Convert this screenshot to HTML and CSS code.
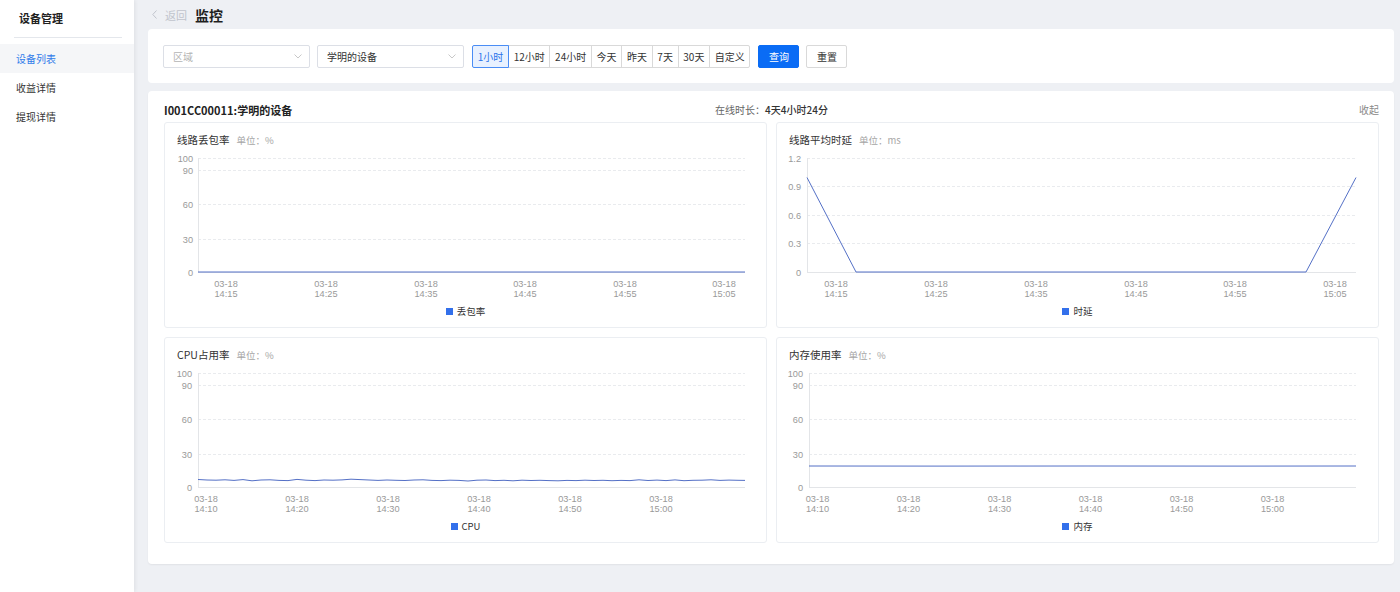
FILE: index.html
```html
<!DOCTYPE html>
<html lang="zh">
<head>
<meta charset="utf-8">
<title>监控</title>
<link rel="stylesheet" href="styles.css">
</head>
<body>
<aside class="sidebar">
  <div class="side-head">设备管理</div>
  <ul class="side-menu">
    <li class="side-item active">设备列表</li>
    <li class="side-item">收益详情</li>
    <li class="side-item">提现详情</li>
  </ul>
</aside>
<main class="main">
  <div class="page-head">
    <svg class="back-icon" width="5" height="9" viewBox="0 0 5 9"><path d="M4.5 0.5 L0.8 4.5 L4.5 8.5" fill="none" stroke="#c0c4cc" stroke-width="1"/></svg>
    <span class="back-text">返回</span>
    <span class="page-title">监控</span>
  </div>

  <section class="filter-card">
    <div class="select placeholder"><span>区域</span><svg width="8" height="5" viewBox="0 0 8 5"><path d="M0.5 0.5 L4 4 L7.5 0.5" fill="none" stroke="#c8c8c8" stroke-width="1"/></svg></div>
    <div class="select second"><span>学明的设备</span><svg width="8" height="5" viewBox="0 0 8 5"><path d="M0.5 0.5 L4 4 L7.5 0.5" fill="none" stroke="#c8c8c8" stroke-width="1"/></svg></div>
    <div class="tabs">
      <span class="tb active">1小时</span>
      <span class="tb">12小时</span>
      <span class="tb">24小时</span>
      <span class="tb">今天</span>
      <span class="tb">昨天</span>
      <span class="tb">7天</span>
      <span class="tb">30天</span>
      <span class="tb">自定义</span>
    </div>
    <button class="btn primary">查询</button>
    <button class="btn plain">重置</button>
  </section>

  <section class="card">
    <div class="card-head">
      <div class="dev-name">I001CC00011:学明的设备</div>
      <div class="online"><span class="online-label">在线时长：</span><span class="online-val">4天4小时24分</span></div>
      <div class="collapse">收起</div>
    </div>
    <div class="charts">
      <!-- chart 1 -->
      <div class="panel">
        <div class="panel-title">线路丢包率<span class="unit">单位：%</span></div>
        <svg class="chart" width="577" height="152" viewBox="0 0 577 152">
          <g class="grid">
            <line x1="21" y1="10.5" x2="568" y2="10.5"/>
            <line x1="21" y1="22.5" x2="568" y2="22.5"/>
            <line x1="21" y1="56.5" x2="568" y2="56.5"/>
            <line x1="21" y1="91.5" x2="568" y2="91.5"/>
          </g>
          <line class="axis" x1="21.5" y1="10" x2="21.5" y2="124"/>
          <line class="axis" x1="21" y1="124.5" x2="568" y2="124.5"/>
          <line class="data" x1="21" y1="124" x2="568" y2="124"/>
          <g class="ylab">
            <text x="16" y="14">100</text>
            <text x="16" y="26">90</text>
            <text x="16" y="60">60</text>
            <text x="16" y="94.5">30</text>
            <text x="16" y="127.5">0</text>
          </g>
          <g class="xlab">
            <text x="49" y="138.7">03-18</text><text x="49" y="149.3">14:15</text>
            <text x="149" y="138.7">03-18</text><text x="149" y="149.3">14:25</text>
            <text x="249" y="138.7">03-18</text><text x="249" y="149.3">14:35</text>
            <text x="348" y="138.7">03-18</text><text x="348" y="149.3">14:45</text>
            <text x="448" y="138.7">03-18</text><text x="448" y="149.3">14:55</text>
            <text x="547" y="138.7">03-18</text><text x="547" y="149.3">15:05</text>
          </g>
        </svg>
        <div class="legend"><i class="swatch"></i><span>丢包率</span></div>
      </div>

      <!-- chart 2 -->
      <div class="panel">
        <div class="panel-title">线路平均时延<span class="unit">单位：ms</span></div>
        <svg class="chart" width="577" height="152" viewBox="0 0 577 152">
          <g class="grid">
            <line x1="18" y1="10.5" x2="567" y2="10.5"/>
            <line x1="18" y1="38.5" x2="567" y2="38.5"/>
            <line x1="18" y1="67.5" x2="567" y2="67.5"/>
            <line x1="18" y1="95.5" x2="567" y2="95.5"/>
          </g>
          <line class="axis" x1="18.5" y1="10" x2="18.5" y2="124"/>
          <line class="axis" x1="18" y1="124.5" x2="567" y2="124.5"/>
          <polyline class="data" points="18,29.5 67,124 517,124 567,29.5"/>
          <g class="ylab">
            <text x="12" y="14">1.2</text>
            <text x="12" y="42">0.9</text>
            <text x="12" y="71">0.6</text>
            <text x="12" y="99">0.3</text>
            <text x="12" y="127.5">0</text>
          </g>
          <g class="xlab">
            <text x="47" y="138.7">03-18</text><text x="47" y="149.3">14:15</text>
            <text x="147" y="138.7">03-18</text><text x="147" y="149.3">14:25</text>
            <text x="247" y="138.7">03-18</text><text x="247" y="149.3">14:35</text>
            <text x="347" y="138.7">03-18</text><text x="347" y="149.3">14:45</text>
            <text x="446" y="138.7">03-18</text><text x="446" y="149.3">14:55</text>
            <text x="546" y="138.7">03-18</text><text x="546" y="149.3">15:05</text>
          </g>
        </svg>
        <div class="legend"><i class="swatch"></i><span>时延</span></div>
      </div>

      <!-- chart 3 -->
      <div class="panel">
        <div class="panel-title">CPU占用率<span class="unit">单位：%</span></div>
        <svg class="chart" width="577" height="152" viewBox="0 0 577 152">
          <g class="grid">
            <line x1="21" y1="10.5" x2="568" y2="10.5"/>
            <line x1="21" y1="22.5" x2="568" y2="22.5"/>
            <line x1="21" y1="56.5" x2="568" y2="56.5"/>
            <line x1="21" y1="91.5" x2="568" y2="91.5"/>
          </g>
          <line class="axis" x1="21.5" y1="10" x2="21.5" y2="124"/>
          <line class="axis" x1="21" y1="124.5" x2="568" y2="124.5"/>
          <polyline class="data" points="21,116.5 30,117 39,117.2 48,116.8 57,117.4 66,116.6 75,117.8 84,117 93,116.8 102,117.4 111,117.6 120,116.4 129,117.2 138,117.6 147,117 156,117.2 165,116.9 174,116.2 183,116.6 192,117 201,117.4 210,117 219,117.3 228,117.5 237,117 246,116.8 255,117.4 264,117.6 273,117.2 282,117.4 291,118 300,117.2 309,117 318,117.6 327,117.3 336,117.8 345,117.2 354,117.5 363,117.3 372,117.6 381,117.8 390,117.4 399,117.6 408,117.2 417,117.5 426,117.3 435,117.7 444,117.4 453,117.6 462,116.8 471,117.5 480,117.1 489,117.6 498,116.9 507,117.7 516,117.3 525,117.2 534,116.8 543,117.4 552,117.1 561,117.3 568,117.4"/>
          <g class="ylab">
            <text x="15" y="14">100</text>
            <text x="15" y="26">90</text>
            <text x="15" y="60">60</text>
            <text x="15" y="94.5">30</text>
            <text x="15" y="127.5">0</text>
          </g>
          <g class="xlab">
            <text x="29" y="138.7">03-18</text><text x="29" y="149.3">14:10</text>
            <text x="120" y="138.7">03-18</text><text x="120" y="149.3">14:20</text>
            <text x="211" y="138.7">03-18</text><text x="211" y="149.3">14:30</text>
            <text x="302" y="138.7">03-18</text><text x="302" y="149.3">14:40</text>
            <text x="393" y="138.7">03-18</text><text x="393" y="149.3">14:50</text>
            <text x="484" y="138.7">03-18</text><text x="484" y="149.3">15:00</text>
          </g>
        </svg>
        <div class="legend"><i class="swatch"></i><span>CPU</span></div>
      </div>

      <!-- chart 4 -->
      <div class="panel">
        <div class="panel-title">内存使用率<span class="unit">单位：%</span></div>
        <svg class="chart" width="577" height="152" viewBox="0 0 577 152">
          <g class="grid">
            <line x1="20" y1="10.5" x2="567" y2="10.5"/>
            <line x1="20" y1="22.5" x2="567" y2="22.5"/>
            <line x1="20" y1="56.5" x2="567" y2="56.5"/>
            <line x1="20" y1="91.5" x2="567" y2="91.5"/>
          </g>
          <line class="axis" x1="20.5" y1="10" x2="20.5" y2="124"/>
          <line class="axis" x1="20" y1="124.5" x2="567" y2="124.5"/>
          <polyline class="data" points="20,103 150,103.1 300,103 450,103.1 567,103"/>
          <g class="ylab">
            <text x="14" y="14">100</text>
            <text x="14" y="26">90</text>
            <text x="14" y="60">60</text>
            <text x="14" y="94.5">30</text>
            <text x="14" y="127.5">0</text>
          </g>
          <g class="xlab">
            <text x="28.5" y="138.7">03-18</text><text x="28.5" y="149.3">14:10</text>
            <text x="119.5" y="138.7">03-18</text><text x="119.5" y="149.3">14:20</text>
            <text x="210.5" y="138.7">03-18</text><text x="210.5" y="149.3">14:30</text>
            <text x="301.5" y="138.7">03-18</text><text x="301.5" y="149.3">14:40</text>
            <text x="392.5" y="138.7">03-18</text><text x="392.5" y="149.3">14:50</text>
            <text x="483.5" y="138.7">03-18</text><text x="483.5" y="149.3">15:00</text>
          </g>
        </svg>
        <div class="legend"><i class="swatch"></i><span>内存</span></div>
      </div>
    </div>
  </section>
</main>
</body>
</html>
```
FILE: styles.css
```css
* { box-sizing: border-box; margin: 0; padding: 0; }

body {
  width: 1400px;
  height: 592px;
  overflow: hidden;
  display: flex;
  background: #eef0f4;
  color: #333;
  font-family: "Noto Sans CJK SC", "Noto Sans", sans-serif;
}

/* sidebar */
.sidebar {
  width: 134px;
  flex: none;
  height: 592px;
  background: #fff;
  box-shadow: 1px 0 4px rgba(0, 0, 0, 0.07);
  position: relative;
  z-index: 1;
}
.side-head {
  height: 38px;
  line-height: 37px;
  margin: 0 12px 0 14px;
  padding-left: 5px;
  border-bottom: 1px solid #e4e7ec;
  font-size: 11px;
  font-weight: 700;
  color: #222;
}
.side-menu { list-style: none; margin-top: 6px; }
.side-item {
  height: 29px;
  line-height: 29px;
  padding-left: 16px;
  font-size: 10px;
  color: #333;
}
.side-item.active {
  background: #f5f6f8;
  color: #2f7bea;
}

/* main */
.main {
  flex: 1;
  padding: 0 7px 0 14px;
}
.page-head {
  height: 29px;
  display: flex;
  align-items: center;
  padding-left: 4px;
}
.back-icon { display: block; }
.back-text {
  margin-left: 8px;
  font-size: 11px;
  color: #c0c4cc;
}
.page-title {
  margin-left: 8px;
  font-size: 14px;
  font-weight: 700;
  color: #1f1f1f;
}

/* filter */
.filter-card {
  height: 54px;
  background: #fff;
  border-radius: 4px;
  padding: 0 15px;
  display: flex;
  align-items: center;
}
.select {
  width: 147px;
  height: 23px;
  border: 1px solid #dcdfe6;
  border-radius: 2px;
  padding: 0 7px 0 9px;
  display: flex;
  align-items: center;
  justify-content: space-between;
  font-size: 10px;
  color: #333;
}
.select svg { display: block; }
.select.placeholder { color: #b4b4b4; }
.select.second { margin-left: 7px; }

.tabs {
  display: flex;
  margin-left: 8px;
}
.tb {
  height: 23px;
  line-height: 21px;
  padding: 0 4.7px;
  border: 1px solid #d9d9d9;
  margin-left: -1px;
  font-size: 10px;
  color: #333;
  background: #fff;
}
.tb:first-child { margin-left: 0; }
.tb.active {
  position: relative;
  z-index: 1;
  background: #e8f1ff;
  border-color: #4a8df5;
  color: #2b74ea;
  border-radius: 2px 0 0 2px;
}
.tb:last-child { border-radius: 0 2px 2px 0; }

.btn {
  width: 41px;
  height: 23px;
  border-radius: 2px;
  font-family: inherit;
  font-size: 10px;
  cursor: pointer;
}
.btn.primary {
  margin-left: 8px;
  background: #0a6cf5;
  border: 1px solid #0a6cf5;
  color: #fff;
}
.btn.plain {
  margin-left: 7px;
  background: #fff;
  border: 1px solid #d9d9d9;
  color: #333;
}

/* main card */
.card {
  margin-top: 8px;
  height: 473px;
  background: #fff;
  border-radius: 4px;
  box-shadow: 0 1px 2px rgba(0, 0, 0, 0.06);
  padding: 0 15px 20px 16px;
}
.card-head {
  display: grid;
  grid-template-columns: 1fr auto 1fr;
  align-items: center;
  padding: 11px 0 4px;
  line-height: 16px;
}
.dev-name {
  font-size: 11px;
  font-weight: 700;
  color: #222;
}
.online { font-size: 10px; }
.online-label { color: #666; }
.online-val { color: #333; font-weight: 500; }
.collapse {
  text-align: right;
  font-size: 10px;
  color: #888;
}

.charts {
  display: grid;
  grid-template-columns: 1fr 1fr;
  gap: 9px;
}
.panel {
  height: 206px;
  border: 1px solid #ebeef2;
  border-radius: 3px;
  padding: 9px 12px 0;
}
.panel-title {
  height: 15px;
  line-height: 15px;
  font-size: 10.5px;
  color: #333;
}
.unit {
  margin-left: 7px;
  font-size: 9.5px;
  color: #a6a6a6;
}
.chart {
  display: block;
  margin-top: 1px;
  overflow: visible;
  font-family: "Liberation Sans", Arial, sans-serif;
}
.grid line {
  stroke: #e9ebee;
  stroke-width: 1;
  stroke-dasharray: 3 2;
}
.axis {
  stroke: #e3e5e8;
  stroke-width: 1;
}
.data {
  fill: none;
  stroke: #5470c6;
  stroke-width: 1;
}
.ylab text {
  font-size: 9.2px;
  fill: #999;
  text-anchor: end;
}
.xlab text {
  font-size: 9.2px;
  fill: #999;
  text-anchor: middle;
}
.legend {
  margin-top: 4px;
  height: 14px;
  display: flex;
  align-items: center;
  justify-content: center;
  gap: 4px;
  font-size: 9.5px;
  color: #333;
}
.swatch {
  display: block;
  width: 7px;
  height: 7px;
  background: #3370eb;
}
```
